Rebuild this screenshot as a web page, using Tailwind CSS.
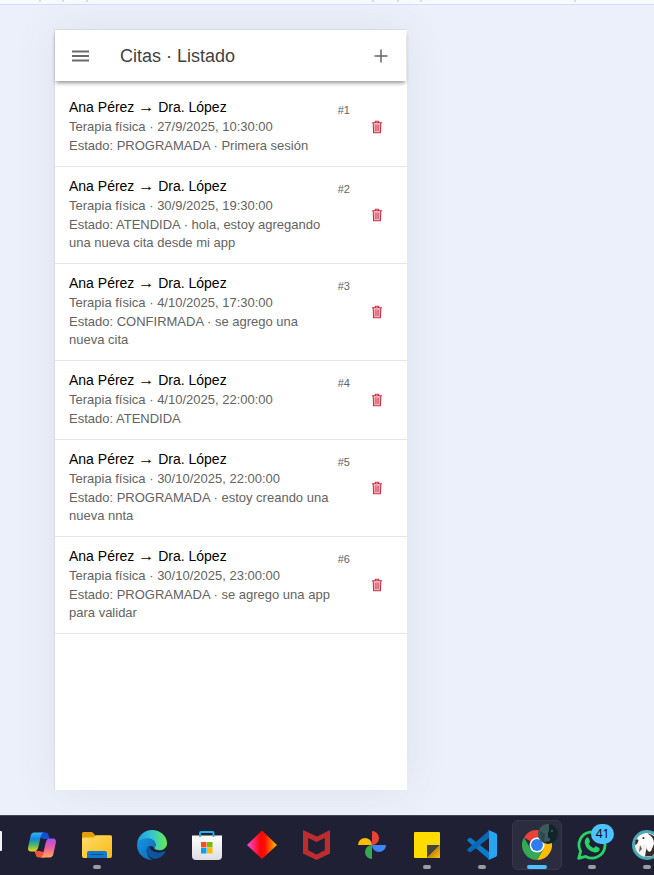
<!DOCTYPE html>
<html lang="es">
<head>
<meta charset="utf-8">
<meta name="viewport" content="width=device-width, initial-scale=1">
<title>Citas · Listado</title>
<script src="https://cdn.jsdelivr.net/npm/@tailwindcss/browser@4"></script>
</head>
<body class="flex min-h-screen flex-col overflow-x-hidden bg-[#ebf0fa] font-['Liberation_Sans',Arial,sans-serif]">
<svg class="hidden" aria-hidden="true">
  <symbol id="trash" viewBox="0 0 12 14">
    <path d="M2.500 3.500h7v9h-7z" fill="#f0b0b8"/>
    <path d="M4.300 2.300V1.200h3.400v1.100M.9 2.800h10.200M2.200 3.200l.4 9.500h6.800l.4-9.500" fill="none" stroke="#cc2f43" stroke-width="1.1" stroke-linejoin="round"/>
    <path d="M4.700 4.800v6.200M6 4.800v6.200M7.300 4.800v6.200" stroke="#cc2f43" stroke-width=".6"/>
  </symbol>
</svg>

<!-- Ruler -->
<div class="flex h-[5px] shrink-0 items-start border-b border-[#cfe0fd] bg-[#f8faff]">
  <svg class="h-[2px] w-[654px] shrink-0" viewBox="0 0 654 2" aria-hidden="true"><path fill="#cfe0fd" d="M39 0h2v2h-2zM62 0h2v2h-2zM86 0h2v2h-2zM372 0h2v2h-2zM397 0h2v2h-2zM420 0h2v2h-2zM574 0h2v2h-2z"/></svg>
</div>

<main class="flex grow pt-6 pr-6 pb-[25px] pl-[54px]">
  <section class="flex w-full max-w-[353px] flex-col border-t border-l border-[#d9dce0] bg-white shadow-[0_0_40px_rgba(90,100,110,0.09)]">
    <header class="mr-px flex h-[51px] items-center pr-[15px] pl-[15px] shadow-[0_3px_4px_-1px_rgba(0,0,0,0.42)]">
      <button type="button" aria-label="Menú" class="flex size-5 items-center justify-center">
        <svg class="h-3 w-[17px]" viewBox="0 0 17 12"><path d="M0 1.500h17M0 6h17M0 10.500h17" stroke="#6a6a6e" stroke-width="1.800"/></svg>
      </button>
      <h1 class="grow pl-[30px] text-lg text-[#424242]">Citas · Listado</h1>
      <button type="button" aria-label="Agregar cita" class="flex size-5 items-center justify-center">
        <svg class="size-[14px]" viewBox="0 0 14 14"><path d="M7 .5v13M.5 7h13" stroke="#66666a" stroke-width="1.5"/></svg>
      </button>
    </header>
    <ul class="pt-[7px]">
      <li class="flex border-b border-[#e6e6e8] pt-[10px] pr-6 pb-[11px] pl-[14px]">
        <div class="flex w-0 grow flex-col gap-px">
          <h2 class="text-[14px] leading-[19px] text-black">Ana Pérez <span class="text-[16px] leading-none">→</span> Dra. López</h2>
          <p class="text-[13px] leading-[18px] text-[#636363]">Terapia física · 27/9/2025, 10:30:00</p>
          <p class="text-[13px] leading-[18px] text-[#636363]">Estado: PROGRAMADA · Primera sesión</p>
        </div>
        <span class="mr-[21px] ml-1 pt-1 text-[11px] leading-4 text-[#636363]">#1</span>
        <button type="button" aria-label="Eliminar cita 1" class="self-center"><svg class="h-[14px] w-3"><use href="#trash"/></svg></button>
      </li>
      <li class="flex border-b border-[#e6e6e8] pt-[10px] pr-6 pb-[11px] pl-[14px]">
        <div class="flex w-0 grow flex-col gap-px">
          <h2 class="text-[14px] leading-[19px] text-black">Ana Pérez <span class="text-[16px] leading-none">→</span> Dra. López</h2>
          <p class="text-[13px] leading-[18px] text-[#636363]">Terapia física · 30/9/2025, 19:30:00</p>
          <p class="text-[13px] leading-[18px] text-[#636363]">Estado: ATENDIDA · hola, estoy agregando una nueva cita desde mi app</p>
        </div>
        <span class="mr-[21px] ml-1 pt-1 text-[11px] leading-4 text-[#636363]">#2</span>
        <button type="button" aria-label="Eliminar cita 2" class="self-center"><svg class="h-[14px] w-3"><use href="#trash"/></svg></button>
      </li>
      <li class="flex border-b border-[#e6e6e8] pt-[10px] pr-6 pb-[11px] pl-[14px]">
        <div class="flex w-0 grow flex-col gap-px">
          <h2 class="text-[14px] leading-[19px] text-black">Ana Pérez <span class="text-[16px] leading-none">→</span> Dra. López</h2>
          <p class="text-[13px] leading-[18px] text-[#636363]">Terapia física · 4/10/2025, 17:30:00</p>
          <p class="text-[13px] leading-[18px] text-[#636363]">Estado: CONFIRMADA · se agrego una nueva cita</p>
        </div>
        <span class="mr-[21px] ml-1 pt-1 text-[11px] leading-4 text-[#636363]">#3</span>
        <button type="button" aria-label="Eliminar cita 3" class="self-center"><svg class="h-[14px] w-3"><use href="#trash"/></svg></button>
      </li>
      <li class="flex border-b border-[#e6e6e8] pt-[10px] pr-6 pb-[11px] pl-[14px]">
        <div class="flex w-0 grow flex-col gap-px">
          <h2 class="text-[14px] leading-[19px] text-black">Ana Pérez <span class="text-[16px] leading-none">→</span> Dra. López</h2>
          <p class="text-[13px] leading-[18px] text-[#636363]">Terapia física · 4/10/2025, 22:00:00</p>
          <p class="text-[13px] leading-[18px] text-[#636363]">Estado: ATENDIDA</p>
        </div>
        <span class="mr-[21px] ml-1 pt-1 text-[11px] leading-4 text-[#636363]">#4</span>
        <button type="button" aria-label="Eliminar cita 4" class="self-center"><svg class="h-[14px] w-3"><use href="#trash"/></svg></button>
      </li>
      <li class="flex border-b border-[#e6e6e8] pt-[10px] pr-6 pb-[11px] pl-[14px]">
        <div class="flex w-0 grow flex-col gap-px">
          <h2 class="text-[14px] leading-[19px] text-black">Ana Pérez <span class="text-[16px] leading-none">→</span> Dra. López</h2>
          <p class="text-[13px] leading-[18px] text-[#636363]">Terapia física · 30/10/2025, 22:00:00</p>
          <p class="text-[13px] leading-[18px] text-[#636363]">Estado: PROGRAMADA · estoy creando una nueva nnta</p>
        </div>
        <span class="mr-[21px] ml-1 pt-1 text-[11px] leading-4 text-[#636363]">#5</span>
        <button type="button" aria-label="Eliminar cita 5" class="self-center"><svg class="h-[14px] w-3"><use href="#trash"/></svg></button>
      </li>
      <li class="flex border-b border-[#e6e6e8] pt-[10px] pr-6 pb-[11px] pl-[14px]">
        <div class="flex w-0 grow flex-col gap-px">
          <h2 class="text-[14px] leading-[19px] text-black">Ana Pérez <span class="text-[16px] leading-none">→</span> Dra. López</h2>
          <p class="text-[13px] leading-[18px] text-[#636363]">Terapia física · 30/10/2025, 23:00:00</p>
          <p class="text-[13px] leading-[18px] text-[#636363]">Estado: PROGRAMADA · se agrego una app para validar</p>
        </div>
        <span class="mr-[21px] ml-1 pt-1 text-[11px] leading-4 text-[#636363]">#6</span>
        <button type="button" aria-label="Eliminar cita 6" class="self-center"><svg class="h-[14px] w-3"><use href="#trash"/></svg></button>
      </li>
    </ul>
  </section>
</main>

<!-- Taskbar -->
<nav aria-label="Barra de tareas" class="h-[60px] shrink-0 overflow-hidden border-t border-[#3f4450] bg-[#1f2033]">
  <div class="-ml-7 flex h-full gap-[25px] pt-[14px]">
    <button type="button" aria-label="Escritorio" class="relative size-[30px] shrink-0"><svg class="size-[30px]" viewBox="0 0 30 30"><rect y="1" width="30" height="20" rx="1" fill="#f2f2f2"/></svg></button>

    <button type="button" aria-label="Copilot" class="relative size-[30px] shrink-0">
      <svg class="size-[30px]" viewBox="0 0 30 30">
        <defs>
          <linearGradient id="c1" x1="0" y1="0" x2="0" y2="1"><stop offset="0" stop-color="#35b4f7"/><stop offset=".35" stop-color="#1089dc"/><stop offset=".65" stop-color="#4db56a"/><stop offset="1" stop-color="#f0d31a"/></linearGradient>
          <linearGradient id="c2" x1="0" y1="0" x2="0" y2="1"><stop offset="0" stop-color="#a54ef0"/><stop offset=".5" stop-color="#ec5f9b"/><stop offset="1" stop-color="#ffa95e"/></linearGradient>
        </defs>
        <path d="M12 2.500h6.500c1.700 0 2.500.8 2.900 2.200L22.500 9h-5L14 8z" fill="#1450d4"/>
        <path d="M18 27.500h-6c-1.700 0-2.700-.8-3.100-2.200L7.500 21h5l4 1z" fill="#f0533a"/>
        <path d="M7.500 2.500H17c-1.800.3-2.600 1.700-3 3.300L11.200 17.600C10.600 20 9.500 21.500 7 21.500H4C1.500 21.500.6 19.800 1.100 17.500L3.600 6C4.100 3.800 5.200 2.500 7.500 2.500z" fill="url(#c1)"/>
        <path d="M22.500 27.500H13c1.800-.3 2.600-1.700 3-3.300l2.800-11.800C19.400 10 20.500 8.500 23 8.500h3c2.500 0 3.400 1.700 2.900 4L26.400 24c-.5 2.200-1.600 3.500-3.900 3.500z" fill="url(#c2)"/>
      </svg>
    </button>

    <button type="button" aria-label="Explorador de archivos" class="relative size-[30px] shrink-0">
      <svg class="size-[30px]" viewBox="0 0 30 30">
        <defs><linearGradient id="f1" x1="0" y1="0" x2="1" y2="1"><stop offset="0" stop-color="#ffdc6b"/><stop offset="1" stop-color="#fbb914"/></linearGradient></defs>
        <path d="M0 3.500Q0 2 1.500 2H9q1.500 0 2.500 1.300L13 5.300h15.500Q30 5.300 30 7v8H0z" fill="#e3a008"/>
        <path d="M0 9q0-1.500 1.500-1.500H10Q11.500 7.500 13 6.200 13.800 5.500 15 5.500h13.500Q30 5.500 30 7v19q0 2-2 2H2q-2 0-2-2z" fill="url(#f1)"/>
        <path d="M5 28v-5q0-2 2-2h16q2 0 2 2v5z" fill="#1279cc"/><path d="M9 24.500h12" stroke="#07518f" stroke-width="1.200" stroke-linecap="round"/>
      </svg>
      <span class="absolute top-[35px] left-[11px] h-1 w-2 rounded-full bg-[#9b9ba6]"></span>
    </button>

    <button type="button" aria-label="Microsoft Edge" class="relative size-[30px] shrink-0">
      <svg class="size-[30px]" viewBox="0 0 256 256">
        <defs>
          <linearGradient id="e1" x1="0" y1=".6" x2="1" y2=".6"><stop offset="0" stop-color="#1b9de2"/><stop offset=".5" stop-color="#36c7cf"/><stop offset="1" stop-color="#66eb4b"/></linearGradient>
          <linearGradient id="e2" x1="0" y1="0" x2="1" y2="1"><stop offset="0" stop-color="#1497df"/><stop offset="1" stop-color="#1066bd"/></linearGradient>
        </defs>
        <path d="M1 118C6 50 61 0 128 0c69 0 128 49 128 112 0 33-26 60-62 60-24 0-47-6-47-18 0-7 12-11 12-28 0-30-28-51-62-51C48 75 15 92 1 118z" fill="url(#e1)"/>
        <path d="M0 128C4 94 43 73 84 73c48 0 75 23 75 53 0 17-11 21-12 28-10-17-30-22-46-12-12 8-19 23-18 43 4 43 35 65 55 71C58 257 0 201 0 128z" fill="url(#e2)"/>
        <path d="M106 132c-28 18-31 48-14 76 21 36 66 48 102 27 20-10 38-27 47-46 3-7-2-10-8-7-43 20-93 12-113-15-8-10-13-23-14-35z" fill="#0d559f"/>
      </svg>
    </button>

    <button type="button" aria-label="Microsoft Store" class="relative size-[30px] shrink-0">
      <svg class="size-[30px]" viewBox="0 0 30 30">
        <defs><linearGradient id="s1" x1="0" y1="0" x2="0" y2="1"><stop offset="0" stop-color="#fff"/><stop offset="1" stop-color="#dedee2"/></linearGradient></defs>
        <path d="M0 5.500h30V26q0 4-4 4H4q-4 0-4-4z" fill="url(#s1)"/>
        <path d="M8 7V3q0-1 1-1h11.500q1 0 1 1v4" fill="none" stroke="#22b6ee" stroke-width="1.800"/>
        <path d="M9 12h5.500v5.500H9z" fill="#f25022"/><path d="M15 12h5.500v5.500H15z" fill="#7fba00"/><path d="M9 18h5.500v5.500H9z" fill="#00a4ef"/><path d="M15 18h5.500v5.500H15z" fill="#ffb900"/>
      </svg>
    </button>

    <button type="button" aria-label="Rombo" class="relative size-[30px] shrink-0">
      <svg class="size-[30px]" viewBox="0 0 30 30"><defs><linearGradient id="d1"><stop offset="0" stop-color="#f94fe0"/><stop offset=".45" stop-color="#fb0505"/><stop offset=".6" stop-color="#fb1005"/><stop offset="1" stop-color="#ffc400"/></linearGradient></defs><path d="M15 .5 30 15 15 29 0 15z" fill="url(#d1)"/></svg>
    </button>

    <button type="button" aria-label="McAfee" class="relative size-[30px] shrink-0">
      <svg class="size-[30px]" viewBox="0 0 30 30"><path fill-rule="evenodd" d="M1 0l14 6.500L28 0v23.500L14.500 30 1 23.500zM6.200 8v12.200l8.300 4.300 8.300-4.300V8l-8.300 4z" fill="#bd2c2e"/></svg>
    </button>

    <button type="button" aria-label="Google Fotos" class="relative size-[30px] shrink-0">
      <svg class="size-[30px]" viewBox="0 0 30 30"><path d="M15 1a7 7 0 0 1 0 14z" fill="#ea4335"/><path d="M29 15a7 7 0 0 1-14 0z" fill="#4285f4"/><path d="M15 29a7 7 0 0 1 0-14z" fill="#34a853"/><path d="M1 15a7 7 0 0 1 14 0z" fill="#fbbc04"/></svg>
    </button>

    <button type="button" aria-label="Notas rápidas" class="relative size-[30px] shrink-0">
      <svg class="size-[30px]" viewBox="0 0 30 30"><defs><linearGradient id="n1" x1="0" y1="0" x2="1" y2="1"><stop offset=".5" stop-color="#c98b00"/><stop offset="1" stop-color="#ffc21a"/></linearGradient></defs><rect x="2" y="2" width="26" height="26" rx="1" fill="#ffdc00"/><path d="M15 15h13L15 28z" fill="#45443f"/><path d="M28 15v13H15z" fill="url(#n1)"/></svg>
      <span class="absolute top-[35px] left-[11px] h-1 w-2 rounded-full bg-[#9b9ba6]"></span>
    </button>

    <button type="button" aria-label="Visual Studio Code" class="relative size-[30px] shrink-0">
      <svg class="size-[30px]" viewBox="0 0 30 30"><path d="M.5 9.500 2.300 8q.8-.6 1.600 0L22 22v7.500L.6 11q-.8-.8-.1-1.500z" fill="#0a7bc9"/><path d="M.5 20.500 2.300 22q.8.600 1.600 0L22 8V.5L.6 19q-.8.800-.1 1.500z" fill="#0b68b4"/><path d="M22 .3 28.500 3Q30 3.700 30 5v20q0 1.300-1.500 2L22 29.800q-.7.200-1.200-.3 1.200.4 1.200-1V1.500q0-1.400-1.200-1 .5-.4 1.200-.2z" fill="#26a5f0"/></svg>
      <span class="absolute top-[35px] left-[11px] h-1 w-2 rounded-full bg-[#9b9ba6]"></span>
    </button>

    <button type="button" aria-label="Google Chrome" class="relative size-[30px] shrink-0">
      <span class="absolute -inset-[10px] rounded-md border border-[#37384a] bg-[#2b2c40]"></span>
      <svg class="relative size-[30px]" viewBox="0 0 48 48"><path d="M24 24 3.200 12A24 24 0 0 1 44.800 12z" fill="#ea4335"/><path d="M24 12h20.800A24 24 0 0 1 24 48l10.400-18z" fill="#fbbc04"/><path d="M24 48A24 24 0 0 1 3.200 12l10.400 18 10.400 6 10.400-6z" fill="#34a853"/><circle cx="24" cy="24" r="12" fill="#fff"/><circle cx="24" cy="24" r="9.500" fill="#2f7cf0"/></svg>
      <svg class="absolute -top-[6px] left-4 size-5" viewBox="0 0 20 20"><circle cx="10" cy="10" r="10" fill="#10242a"/><path d="M11 0A10 10 0 0 0 5 18.600L12 17v-3h-2V9l1-2z" fill="#3b5a5b"/><path d="M1.500 7 7 10l-1 8-3-3z" fill="#2a484b"/><circle cx="14" cy="7" r=".8" fill="#70908e"/></svg>
      <span class="absolute top-[35px] left-[5px] h-1 w-5 rounded-full bg-[#4cc2ff]"></span>
    </button>

    <button type="button" aria-label="WhatsApp, 41 mensajes" class="relative size-[30px] shrink-0">
      <svg class="size-[30px]" viewBox="0 0 30 30"><path d="M1.700 28.300 3.600 21.300A13 13 0 1 1 8.700 26.400z" fill="none" stroke="#25d366" stroke-width="2.800" stroke-linejoin="round"/><path d="M9.500 7.800q1-.9 2 .1l1.500 3.300q.3.800-1.300 2.500 1.600 3.200 5 4.600 1.600-2.200 2.300-2l3.300 1.600q.8.500.1 2.400-1.200 2.600-4.700 2.200Q9.500 20.800 7.700 13q-.6-3 1.800-5.200z" fill="#25d366"/></svg>
      <span class="absolute -top-[6px] left-[14px] flex h-5 w-[23px] items-center justify-center rounded-full bg-[#4cc2ff] font-['Open_Sans',sans-serif] text-xs text-black">41</span>
      <span class="absolute top-[35px] left-[11px] h-1 w-2 rounded-full bg-[#9b9ba6]"></span>
    </button>

    <button type="button" aria-label="DBeaver" class="relative size-[30px] shrink-0">
      <svg class="size-[30px]" viewBox="0 0 30 30"><circle cx="15" cy="15" r="13.500" fill="#f4f2f0" stroke="#4aa9b4" stroke-width="3"/><path d="M16 3.500q5 1 8 5l2.500 7-1.500 6-5 4.500-7 .5 1-6q2-4 0-8l4-3z" fill="#382a25"/><path d="M7 7q4-4 9-3 6 3 6 10l-3 7q-3 2-4-2l-1-5-5 1q-3-1-2-8z" fill="#fff"/><path d="M3.500 10q2-1.500 3 .5L5 14l-2 1z" fill="#382a25"/><circle cx="11.500" cy="8" r="1.100" fill="#382a25"/><path d="M8 15l2 4-3 3z" fill="#6b5a52"/></svg>
      <span class="absolute top-[35px] left-[11px] h-1 w-2 rounded-full bg-[#9b9ba6]"></span>
    </button>
  </div>
</nav>
</body>
</html>
